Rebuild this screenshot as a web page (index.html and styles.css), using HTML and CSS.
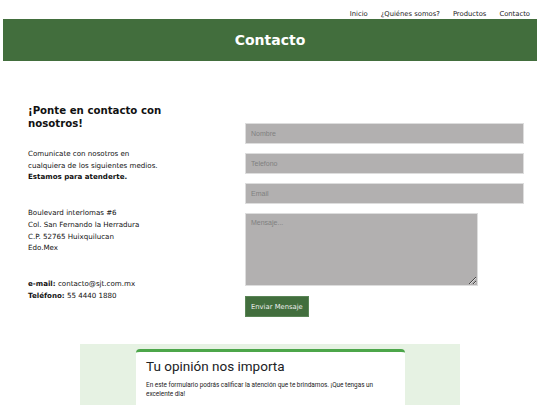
FILE: index.html
```html
<!DOCTYPE html>
<html lang="es">
<head>
<meta charset="UTF-8" />
<meta name="viewport" content="width=device-width, initial-scale=1" />
<title>Contacto</title>
<link rel="stylesheet" href="styles.css">
</head>
<body>

  <nav class="menu">
    <a href="#">Inicio</a>
    <a href="#">¿Quiénes somos?</a>
    <a href="#">Productos</a>
    <a href="#">Contacto</a>
  </nav>

  <header class="banner">
    <h1>Contacto</h1>
  </header>

  <main class="contacto">
    <div class="info">
      <h2>¡Ponte en contacto con nosotros!</h2>
      <p>Comunicate con nosotros en cualquiera de los siguientes medios.<br><b>Estamos para atenderte.</b></p>
      <p>Boulevard interlomas #6<br>Col. San Fernando la Herradura<br>C.P. 52765 Huixquilucan<br>Edo.Mex</p>
      <p><b>e-mail:</b> contacto@sjt.com.mx<br><b>Teléfono:</b> 55 4440 1880</p>
    </div>

    <form class="form">
      <input type="text" placeholder="Nombre" />
      <input type="text" placeholder="Telefono" />
      <input type="text" placeholder="Email" />
      <textarea placeholder="Mensaje..."></textarea>
      <button type="button" class="enviar">Enviar Mensaje</button>
    </form>
  </main>

  <section class="encuesta">
    <div class="tarjeta">
      <h3>Tu opinión nos importa</h3>
      <p>En este formulario podrás calificar la atención que te brindamos. ¡Que tengas un excelente dia!</p>
    </div>
  </section>

</body>
</html>
```

FILE: styles.css
```css
html, body {
  height: 405px;
  overflow: hidden;
}
body {
  margin: 0;
  font-family: "DejaVu Sans", Verdana, sans-serif;
  color: #111;
  background: #fff;
}
.menu {
  display: flex;
  justify-content: flex-end;
  gap: 13px;
  padding: 10px 10px 0 0;
  height: 9px;
  font-size: 6.8px;
}
.menu a {
  color: #222;
  text-decoration: none;
}
.banner {
  background: #426e3d;
  height: 42px;
  display: flex;
  align-items: center;
  justify-content: center;
  margin: 0 3px;
}
.banner h1 {
  margin: 0;
  color: #fff;
  font-size: 14px;
  font-weight: bold;
}
.contacto {
  display: flex;
  padding: 40px 16px 0 28px;
}
.info {
  width: 218px;
}
.info h2 {
  margin: 3px 0 18px;
  font-size: 10.2px;
  line-height: 13px;
  width: 150px;
}
.info p {
  margin: 0 0 24px;
  font-size: 7.1px;
  line-height: 11.7px;
  width: 140px;
}
.form {
  flex: 1;
  display: flex;
  flex-direction: column;
  align-items: flex-start;
  padding-top: 22px;
}
.form input,
.form textarea {
  box-sizing: border-box;
  width: 279px;
  height: 21px;
  margin: 0 0 9px;
  padding: 0 5px;
  background: #b2b0b0;
  border: 1px solid #ddd;
  font-family: "Liberation Sans", Arial, sans-serif;
  font-size: 7px;
}
.form textarea {
  width: 233px;
  height: 73px;
  padding: 5px;
  resize: both;
}
.form ::placeholder {
  color: #808080;
}
.enviar {
  margin-top: 1px;
  background: #426e3d;
  color: #eee;
  border: 1px solid #5a8556;
  padding: 0 5px;
  height: 21px;
  font-family: "DejaVu Sans", Verdana, sans-serif;
  font-size: 6.8px;
}
.encuesta {
  margin: 19px 0 0 80px;
  width: 380px;
  height: 63px;
  background: #e6f2e3;
  padding-top: 5px;
  box-sizing: border-box;
  overflow: hidden;
}
.tarjeta {
  margin-left: 56px;
  width: 269px;
  height: 58px;
  background: #fff;
  border-top: 3px solid #4ca64a;
  border-bottom: 1px solid #e6e6e6;
  border-radius: 4px 4px 0 0;
  padding: 5px 10px 0;
  box-sizing: border-box;
}
.tarjeta h3 {
  margin: 0 0 6px;
  font-family: Roboto, sans-serif;
  font-weight: 400;
  font-size: 13.5px;
  line-height: 18px;
  color: #202124;
}
.tarjeta p {
  margin: 0;
  font-family: Roboto, sans-serif;
  font-size: 6.4px;
  line-height: 9px;
  color: #222;
  padding-right: 14px;
}
```
